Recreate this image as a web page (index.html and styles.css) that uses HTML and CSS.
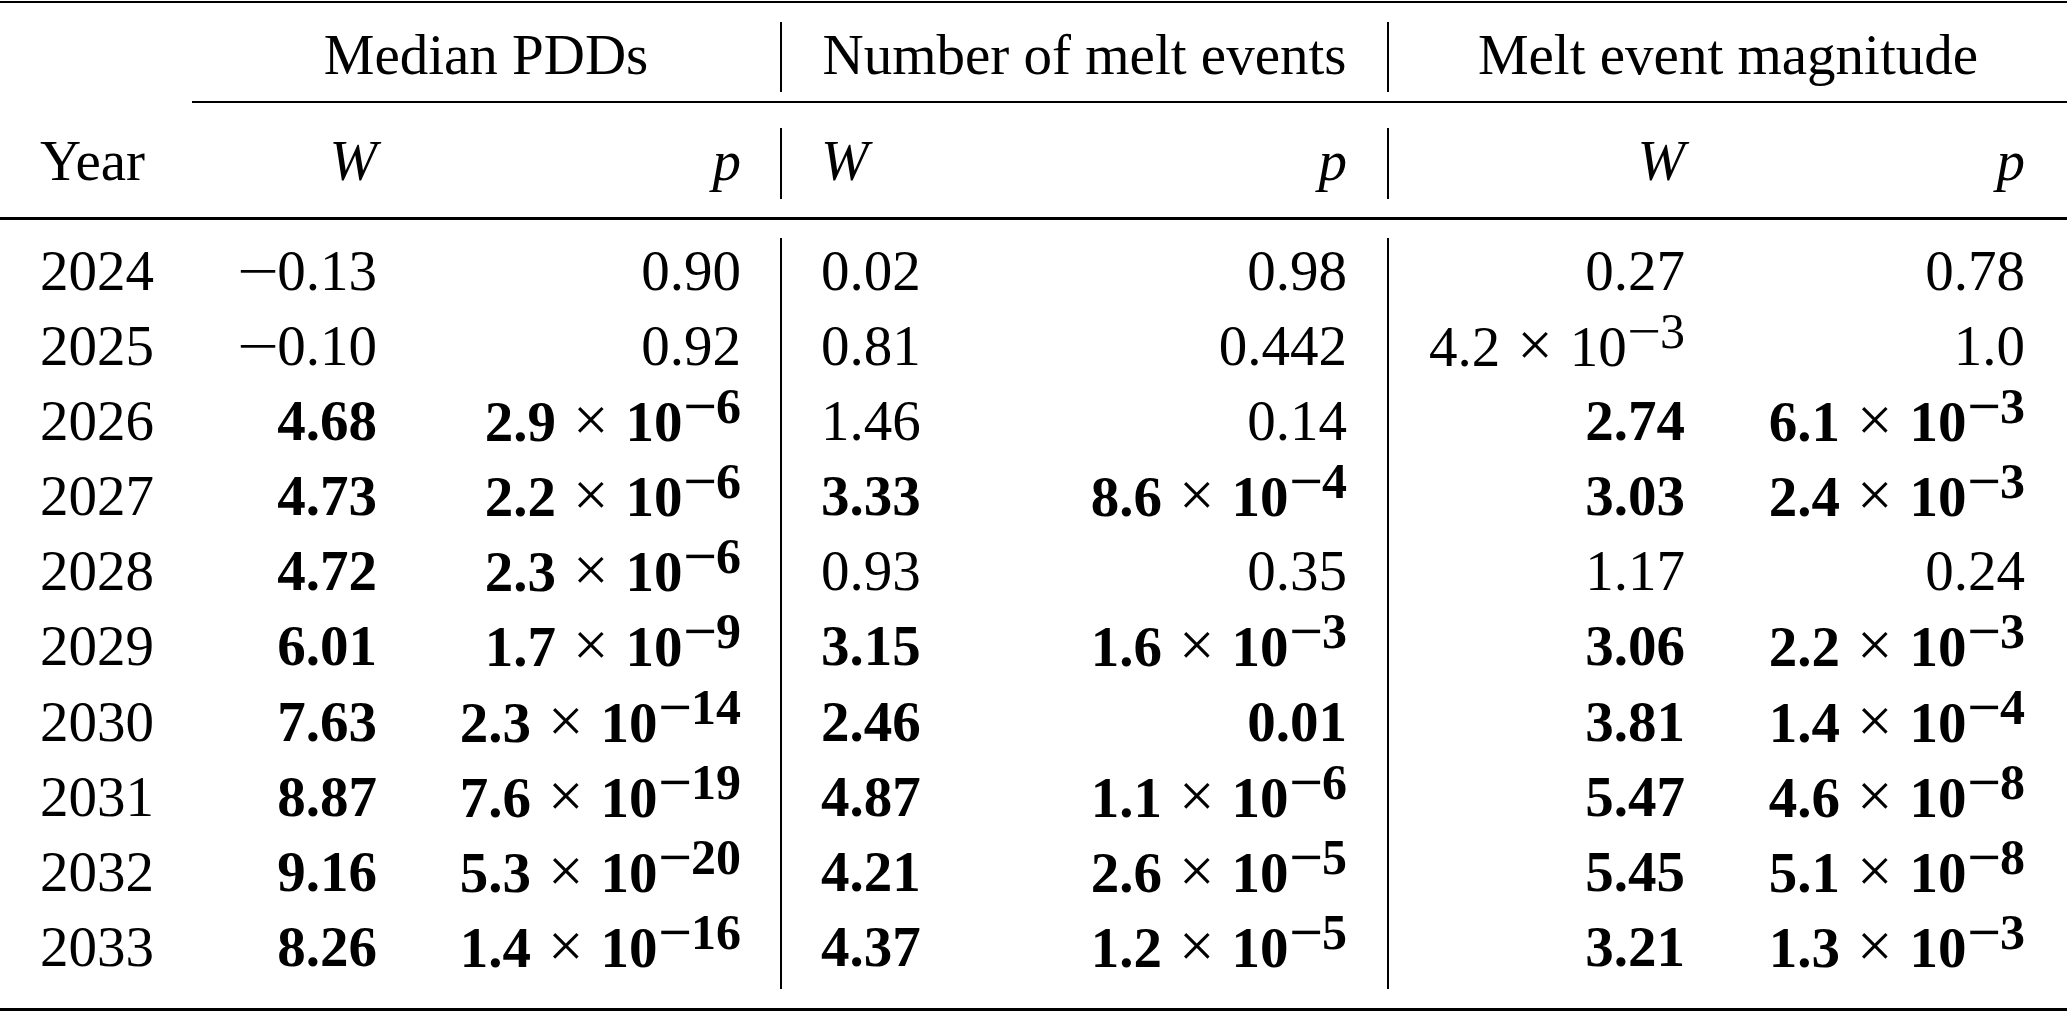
FILE: index.html
```html
<!DOCTYPE html>
<html>
<head>
<meta charset="utf-8">
<link rel="stylesheet" href="styles.css">
</head>
<body>
<div class="table">
  <div class="rule-top"></div>
  <div class="grid hdr1">
    <div class="cell"></div>
    <div class="cell span2 center">Median PDDs</div>
    <div class="vbar"></div>
    <div class="cell span2 center">Number of melt events</div>
    <div class="vbar"></div>
    <div class="cell span2 center">Melt event magnitude</div>
  </div>
  <div class="cmid"></div>
  <div class="grid hdr2">
    <div class="cell ca">Year</div>
    <div class="cell cb"><i>W</i></div>
    <div class="cell cc"><i>p</i></div>
    <div class="vbar"></div>
    <div class="cell cd"><i>W</i></div>
    <div class="cell ce"><i>p</i></div>
    <div class="vbar"></div>
    <div class="cell cf"><i>W</i></div>
    <div class="cell cg"><i>p</i></div>
  </div>
  <div class="midrule"></div>
  <div class="grid body">
    <div class="vbar v1"></div>
    <div class="vbar v2"></div>

    <div class="cell ca">2024</div>
    <div class="cell cb"><span class="neg">−</span>0.13</div>
    <div class="cell cc">0.90</div>
    <div class="cell cd">0.02</div>
    <div class="cell ce">0.98</div>
    <div class="cell cf">0.27</div>
    <div class="cell cg">0.78</div>

    <div class="cell ca">2025</div>
    <div class="cell cb"><span class="neg">−</span>0.10</div>
    <div class="cell cc">0.92</div>
    <div class="cell cd">0.81</div>
    <div class="cell ce">0.442</div>
    <div class="cell cf">4.2<span class="x">×</span>10<sup class="exp"><span class="sm">−</span>3</sup></div>
    <div class="cell cg">1.0</div>

    <div class="cell ca">2026</div>
    <div class="cell cb bold">4.68</div>
    <div class="cell cc bold">2.9<span class="x">×</span>10<sup class="exp"><span class="sm">−</span>6</sup></div>
    <div class="cell cd">1.46</div>
    <div class="cell ce">0.14</div>
    <div class="cell cf bold">2.74</div>
    <div class="cell cg bold">6.1<span class="x">×</span>10<sup class="exp"><span class="sm">−</span>3</sup></div>

    <div class="cell ca">2027</div>
    <div class="cell cb bold">4.73</div>
    <div class="cell cc bold">2.2<span class="x">×</span>10<sup class="exp"><span class="sm">−</span>6</sup></div>
    <div class="cell cd bold">3.33</div>
    <div class="cell ce bold">8.6<span class="x">×</span>10<sup class="exp"><span class="sm">−</span>4</sup></div>
    <div class="cell cf bold">3.03</div>
    <div class="cell cg bold">2.4<span class="x">×</span>10<sup class="exp"><span class="sm">−</span>3</sup></div>

    <div class="cell ca">2028</div>
    <div class="cell cb bold">4.72</div>
    <div class="cell cc bold">2.3<span class="x">×</span>10<sup class="exp"><span class="sm">−</span>6</sup></div>
    <div class="cell cd">0.93</div>
    <div class="cell ce">0.35</div>
    <div class="cell cf">1.17</div>
    <div class="cell cg">0.24</div>

    <div class="cell ca">2029</div>
    <div class="cell cb bold">6.01</div>
    <div class="cell cc bold">1.7<span class="x">×</span>10<sup class="exp"><span class="sm">−</span>9</sup></div>
    <div class="cell cd bold">3.15</div>
    <div class="cell ce bold">1.6<span class="x">×</span>10<sup class="exp"><span class="sm">−</span>3</sup></div>
    <div class="cell cf bold">3.06</div>
    <div class="cell cg bold">2.2<span class="x">×</span>10<sup class="exp"><span class="sm">−</span>3</sup></div>

    <div class="cell ca">2030</div>
    <div class="cell cb bold">7.63</div>
    <div class="cell cc bold">2.3<span class="x">×</span>10<sup class="exp"><span class="sm">−</span>14</sup></div>
    <div class="cell cd bold">2.46</div>
    <div class="cell ce bold">0.01</div>
    <div class="cell cf bold">3.81</div>
    <div class="cell cg bold">1.4<span class="x">×</span>10<sup class="exp"><span class="sm">−</span>4</sup></div>

    <div class="cell ca">2031</div>
    <div class="cell cb bold">8.87</div>
    <div class="cell cc bold">7.6<span class="x">×</span>10<sup class="exp"><span class="sm">−</span>19</sup></div>
    <div class="cell cd bold">4.87</div>
    <div class="cell ce bold">1.1<span class="x">×</span>10<sup class="exp"><span class="sm">−</span>6</sup></div>
    <div class="cell cf bold">5.47</div>
    <div class="cell cg bold">4.6<span class="x">×</span>10<sup class="exp"><span class="sm">−</span>8</sup></div>

    <div class="cell ca">2032</div>
    <div class="cell cb bold">9.16</div>
    <div class="cell cc bold">5.3<span class="x">×</span>10<sup class="exp"><span class="sm">−</span>20</sup></div>
    <div class="cell cd bold">4.21</div>
    <div class="cell ce bold">2.6<span class="x">×</span>10<sup class="exp"><span class="sm">−</span>5</sup></div>
    <div class="cell cf bold">5.45</div>
    <div class="cell cg bold">5.1<span class="x">×</span>10<sup class="exp"><span class="sm">−</span>8</sup></div>

    <div class="cell ca">2033</div>
    <div class="cell cb bold">8.26</div>
    <div class="cell cc bold">1.4<span class="x">×</span>10<sup class="exp"><span class="sm">−</span>16</sup></div>
    <div class="cell cd bold">4.37</div>
    <div class="cell ce bold">1.2<span class="x">×</span>10<sup class="exp"><span class="sm">−</span>5</sup></div>
    <div class="cell cf bold">3.21</div>
    <div class="cell cg bold">1.3<span class="x">×</span>10<sup class="exp"><span class="sm">−</span>3</sup></div>
  </div>
  <div class="rule-bottom"></div>
</div>
</body>
</html>
```

FILE: styles.css
```css
html, body {
  margin: 0;
  padding: 0;
  background: #ffffff;
}

body {
  color: #000000;
  font-family: "Liberation Serif", "Times New Roman", serif;
  font-size: 57px;
}

.table {
  width: 2067px;
}

.rule-top {
  height: 2px;
  margin-top: 1px;
  background: #000000;
}

.cmid {
  height: 2px;
  margin-left: 192px;
  background: #000000;
}

.midrule {
  height: 3px;
  background: #000000;
}

.rule-bottom {
  height: 3px;
  background: #000000;
}

.grid {
  display: grid;
  grid-template-columns: 192px 205px 383px 2px 218px 387px 2px 316px 362px;
}

.hdr1 {
  grid-template-rows: 70px;
  padding: 19px 0 9px;
}

.hdr2 {
  grid-template-rows: 71px;
  padding: 25px 0 18px;
}

.body {
  grid-template-rows: repeat(10, 75.1px);
  padding: 18px 0 19px;
}

.vbar {
  background: #000000;
}

.body .v1 {
  grid-column: 4;
  grid-row: 1 / -1;
}

.body .v2 {
  grid-column: 7;
  grid-row: 1 / -1;
}

.cell {
  line-height: 65px;
  white-space: nowrap;
}

.span2 {
  grid-column: span 2;
}

.center {
  text-align: center;
}

.ca {
  padding-left: 40px;
}

.cb {
  text-align: right;
  padding-right: 20px;
}

.cc {
  text-align: right;
  padding-right: 39px;
}

.cd {
  text-align: left;
  padding-left: 39px;
}

.ce {
  text-align: right;
  padding-right: 40px;
}

.cf {
  text-align: right;
  padding-right: 20px;
}

.cg {
  text-align: right;
  padding-right: 42px;
}

.bold {
  font-weight: bold;
}

.neg {
  display: inline-block;
  transform: scaleX(1.3);
  transform-origin: left center;
  margin-right: 8px;
}

.x {
  font-weight: normal;
  font-size: 63px;
  margin: 0 17px;
}

.exp {
  font-size: 50px;
  line-height: 0;
  vertical-align: 18px;
}

.sm {
  display: inline-block;
  transform: scaleX(1.2);
  transform-origin: left center;
  margin-right: 5px;
}
```
